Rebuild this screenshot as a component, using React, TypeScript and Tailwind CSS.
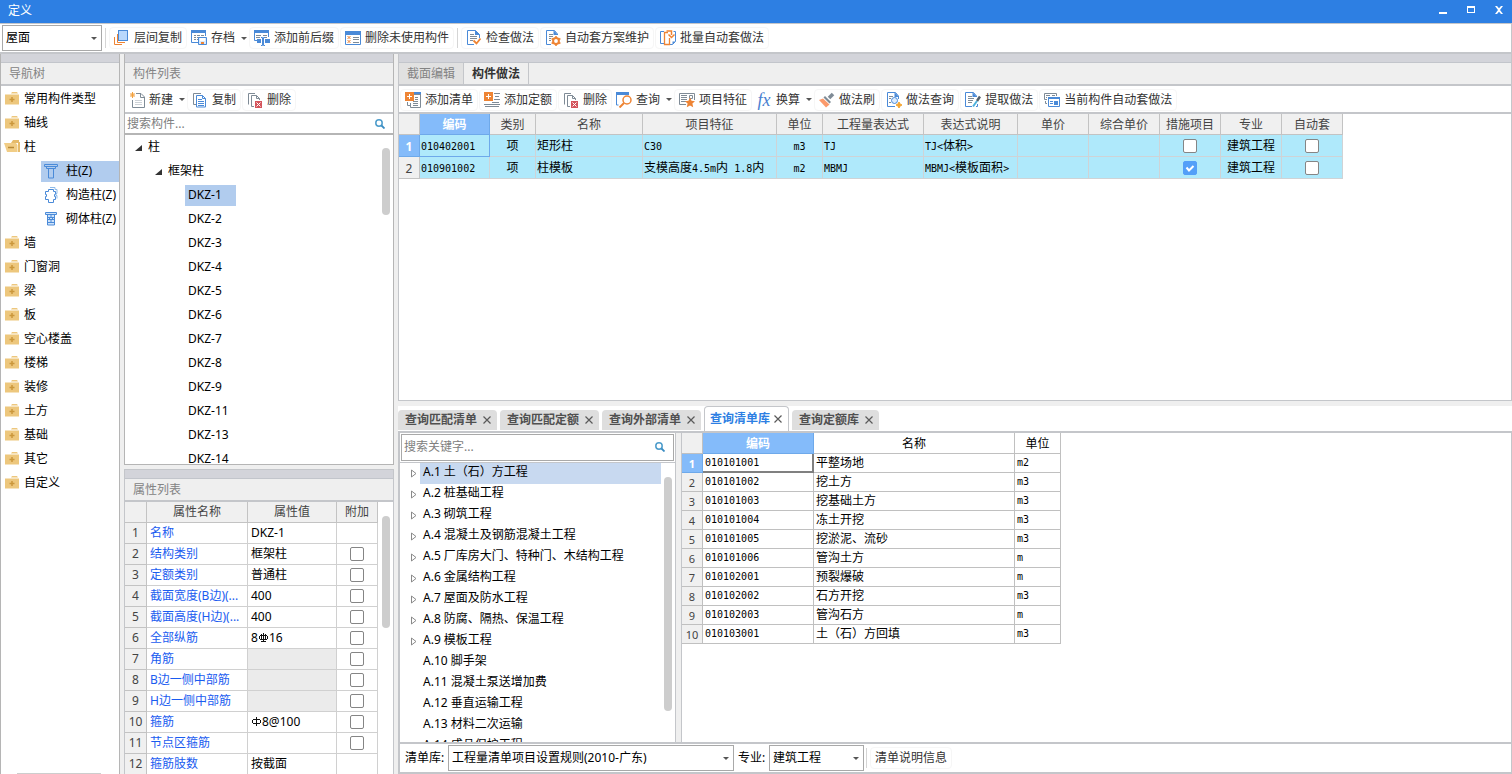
import { useState, type ReactNode } from "react";
import clsx from "clsx";

const BLUE = "#4a8ad8";
const GRAY = "#7f8b96";
const ORANGE = "#ee8434";

const Svg = ({ children }: { children: ReactNode }) => (
  <svg className="size-4 shrink-0" viewBox="0 0 16 16" fill="none" aria-hidden="true">
    {children}
  </svg>
);

const Caret = () => (
  <svg className="h-[3px] w-1.5 shrink-0" viewBox="0 0 6 3" aria-hidden="true">
    <path d="M0 0h6L3 3z" fill="#555" />
  </svg>
);

const LayerCopyIcon = () => (
  <Svg>
    <path d="M3.500 4v8.500H11M.5 7v7.500H8" stroke={ORANGE} />
    <rect x="4.5" y="0.5" width="9" height="10" fill="#b9d8fc" stroke={BLUE} />
  </Svg>
);

const ArchiveIcon = () => (
  <Svg>
    <path d="M0 0h15v3H0z" fill={BLUE} />
    <path d="M.5 3v9.500H7M14.500 3v3" stroke={BLUE} />
    <path d="M3 5.500h2M6 5.500h3M10 5.500h3M3 7.500h2M6 7.500h2M3 9.500h2M6 9.500h1" stroke={GRAY} />
    <path d="M7.500 7.500h8v7h-8z" fill="#d9eafd" stroke={BLUE} />
    <path d="M9 8h5v3H9z" fill="#fff" />
    <path d="M10 12h3v2h-3z" fill={ORANGE} />
  </Svg>
);

const AffixIcon = () => (
  <Svg>
    <path d="M0 0h15v3H0z" fill={BLUE} />
    <path d="M.5 3v7.500H3M14.500 3v4" stroke={BLUE} />
    <path d="M2 5.500h5M2 7.500h4M9 5.500h4M10 7.500h3" stroke={GRAY} />
    <path d="M3 9h4v4H3zM11 9h5v4h-5z" fill={BLUE} />
    <path d="M7 7.500h1.500v8H7M11 7.500H9.500v8H11" stroke={BLUE} />
  </Svg>
);

const UnusedIcon = () => (
  <Svg>
    <path d="M.5 2v12.500h15V2" stroke={BLUE} />
    <path d="M0 1h16v4H0z" fill={BLUE} />
    <path d="M8 7.500h6M8 9.500h6M8 12.500h6" stroke={GRAY} />
    <path d="m2.500 6 3 3m0-3-3 3m0 1 3 3m0-3-3 3" stroke={ORANGE} />
  </Svg>
);

const DocCheckIcon = () => (
  <Svg>
    <path d="M13.500 8V4.500L9.500.5h-8v14H8" stroke={BLUE} />
    <path d="M9 0v5h5z" fill={BLUE} />
    <path d="M4 4.500h4M4 6.500h7M4 8.500h7M4 10.500h3" stroke={GRAY} />
    <path d="m7.500 10.500 3 3L14.500 8.500" stroke={ORANGE} strokeWidth="1.800" />
  </Svg>
);

const DocGearIcon = () => (
  <Svg>
    <path d="M12.500 5V4L9.500.5h-8v14H6" stroke={BLUE} />
    <path d="M8.500 0v5H13z" fill={BLUE} />
    <path d="M4 4.500h4M4 6.500h4M4 8.500h2M4 10.500h2" stroke={GRAY} />
    <circle cx="11" cy="11" r="2.900" stroke={ORANGE} strokeWidth="2" />
    <path d="M11 6v2M11 14v2M6.600 8.500l1.800 1M13.600 12.500l1.800 1M6.600 13.500l1.800-1M13.600 9.500l1.800-1" stroke={ORANGE} strokeWidth="1.600" />
  </Svg>
);

const BatchIcon = () => (
  <Svg>
    <path d="M4 1.500H.5v12H4" stroke={BLUE} />
    <path d="M9.500 14.500h3l3-3v-10h-2" stroke={BLUE} />
    <path d="M12.500 14.500v-3h3" fill={BLUE} />
    <path d="M8 2.500H4.500v12h5V8" stroke={ORANGE} strokeWidth="1.300" />
    <path d="M6.500 1h5v4M8.500 4.500l3 3 3-3" stroke={ORANGE} strokeWidth="1.500" />
  </Svg>
);

const NewIcon = () => (
  <Svg>
    <path d="M7 1.500h5l3.500 3.500v10.500h-12V8" stroke={GRAY} />
    <path d="M11.500 1.500v4h4" stroke={GRAY} />
    <path d="M6 8.500h7M6 10.500h7M6 12.500h7" stroke="#cdd2d7" />
    <path d="m1.500 1 4 4m0-4-4 4M3.500 0v6M1 3h5" stroke="#f3a03c" />
  </Svg>
);

const CopyIcon = () => (
  <Svg>
    <path d="M9 1.500H1.500v11H4" stroke={GRAY} />
    <path d="M4.500 3.500h6l3 3v8.500h-9z" fill="#fff" stroke={BLUE} />
    <path d="M10.500 3.500v3h3" stroke={BLUE} />
    <path d="M6 7.500h4M6 9.500h6M6 11.500h6M6 13.500h6" stroke={BLUE} />
  </Svg>
);

const DeleteIcon = () => (
  <Svg>
    <path d="M8 1.500H1.500v11" stroke={GRAY} />
    <path d="M7 14.500H4.500v-11h5l3 3V8M9.500 3.500v3h3" stroke={GRAY} />
    <path d="M8 9h7v7H8z" fill="#d4545c" />
    <path d="m9.500 10.500 4 4m0-4-4 4" stroke="#fff" />
  </Svg>
);

const AddListIcon = () => (
  <Svg>
    <path d="M9 0h7v3H9z" fill={BLUE} />
    <path d="M9 2.500h6.500v13H5.500V11" stroke={GRAY} />
    <path d="M2.500 10v3.500h3M10 5.500h3M10 7.500h3M8 9.500h5M8 11.500h5M8 13.500h5" stroke={GRAY} />
    <path d="M0 0h9v9H0z" fill={ORANGE} />
    <path d="M4.500 2v5M2 4.500h5" stroke="#fff" />
  </Svg>
);

const AddQuotaIcon = () => (
  <Svg>
    <path d="M10 1.500h6M11 4.500h4M10 7.500h6M8 10.500h7M0 12.500h16M1 14.500h14" stroke={GRAY} />
    <path d="M0 0h9v9H0z" fill={ORANGE} />
    <path d="M4.500 2v5M2 4.500h5" stroke="#fff" />
  </Svg>
);

const QueryIcon = () => (
  <Svg>
    <path d="M0 0h13v3H0z" fill={BLUE} />
    <path d="M.5 3v10h2" stroke={BLUE} />
    <circle cx="11" cy="8" r="4" stroke={ORANGE} strokeWidth="1.500" />
    <path d="m8 11-4.500 4.500" stroke={ORANGE} strokeWidth="2" />
  </Svg>
);

const FeatureIcon = () => (
  <Svg>
    <path d="M15.500 8V1.500H.5v11H7" stroke={GRAY} />
    <path d="M2 3.500h6M2 5.500h6M2 7.500h6M2 9.500h5" stroke={GRAY} />
    <path d="M10.500 3.500h3v3h-3z" stroke={GRAY} />
    <path d="m11 5.500 1.500 3.300 3.500.4-2.600 2.400.8 3.600-3.200-1.800-3.200 1.800.8-3.600L6 9.200l3.500-.4z" fill={ORANGE} />
  </Svg>
);

const FxIcon = () => (
  <span className="w-4 shrink-0 font-['Liberation_Serif',serif] text-lg leading-4 text-[#4a7fd0] italic">
    fx
  </span>
);

const BrushIcon = () => (
  <Svg>
    <path d="m14 2-4 4" stroke={GRAY} strokeWidth="3.500" />
    <path d="m6 4 6 6-1.500 1.500-6-6z" fill={GRAY} />
    <path d="M4 6.500 0 8l7 7.500 3.500-3z" fill="#fb9a6c" />
  </Svg>
);

const DocSearchIcon = () => (
  <Svg>
    <path d="M12.500 7V4L9.500.5h-8v14H9" stroke={BLUE} />
    <path d="M8.500 0v5H13z" fill={BLUE} />
    <path d="M3 4.500h4M3 6.500h2M3 10.500h2" stroke={GRAY} />
    <circle cx="8.500" cy="8.500" r="3" fill="#dcebfd" stroke={BLUE} />
    <path d="m13 10 1 2 2 1-2 1-1 2-1-2-2-1 2-1z" fill="#f5a531" stroke="#f5a531" />
  </Svg>
);

const ExtractIcon = () => (
  <Svg>
    <path d="M11.500 5V4L8.500.5h-8v14H7M12.500 12v2.500H11" stroke={BLUE} />
    <path d="M7.500 0v5H12z" fill={BLUE} />
    <path d="M3 4.500h4M3 6.500h6M3 8.500h5M3 10.500h4" stroke={GRAY} />
    <path d="M15 4.500 12 9" stroke="#56616b" strokeWidth="2.500" />
    <path d="m12 9-4 5.500" stroke="#4db1dc" strokeWidth="2" />
  </Svg>
);

const AutoSetIcon = () => (
  <Svg>
    <path d="M12.500 4V1.500H.5v6H3" stroke={GRAY} />
    <path d="M2 3.500h4M8 3.500h3M2 5.500h1M1.500 9v2.500H3" stroke={GRAY} />
    <path d="M4.500 5.500h11v9h-11z" fill="#fff" stroke={BLUE} />
    <path d="M4 5h12v2H4zM10 9h4v4h-4z" fill={BLUE} />
    <path d="M6 9.500h3M6 11.500h3" stroke={BLUE} />
  </Svg>
);

const SearchIcon = () => (
  <svg className="size-2.5 shrink-0" viewBox="0 0 10 10" fill="none" aria-hidden="true">
    <circle cx="4" cy="4" r="3.200" stroke="#4d9ccb" strokeWidth="1.500" />
    <path d="m6.500 6.500 3 3" stroke="#3a8cc2" strokeWidth="1.800" />
  </svg>
);

const CloseIcon = () => (
  <svg className="size-2.5 shrink-0" viewBox="0 0 10 10" fill="none" aria-hidden="true">
    <path d="m1.500 1.500 7 7m0-7-7 7" stroke="#5a5a5a" strokeWidth="1.200" />
  </svg>
);

const FolderIcon = ({ open }: { open?: boolean }) => (
  <Svg>
    {open ? (
      <>
        <path d="M9 1h6v2h1v10h-2V4H7z" fill="#e6bb6a" />
        <path d="M0 4h12l1.500 2v7H3z" fill="#f1cd86" />
        <path d="M4 8.500h6" stroke="#b98a35" strokeWidth="1.500" />
      </>
    ) : (
      <>
        <path d="M8 1h5l1 1.500H7zM1 3.500h14v10H1z" fill="#edc77d" />
        <path d="M8 6v5M5.500 8.500h5" stroke="#cb973c" strokeWidth="1.500" />
      </>
    )}
  </Svg>
);

const ColumnIcon = () => (
  <Svg>
    <path d="M.5 1.500h13v2H.5zM2.500 3.500v2h9v-2M4.500 5.500v9.500h5V5.500" stroke={BLUE} />
  </Svg>
);

const StructColumnIcon = () => (
  <Svg>
    <path d="M4.500 2.500h5v2h2v3h-1v2h1v3h-2v3h-5v-3h-3v-3h1v-2h-1v-3h3z" stroke={BLUE} />
    <path d="M6 .500h5v2h2v4h-1v2h1v3" stroke="#8fbbe9" />
  </Svg>
);

const MasonryIcon = () => (
  <Svg>
    <path d="M1.500 1.500h11v2h-11zM3.500 3.500v10.500h7V3.500" fill="#cfe3fa" stroke={BLUE} />
    <path d="M4 6.500h6M4 8.500h6M4 11.500h6M7 4v2.500M5.500 6.500v2M8.500 6.500v2M7 8.500v3" stroke={BLUE} />
  </Svg>
);

/* rebar grade marks */
const Rebar = ({ grade }: { grade: 1 | 3 }) => (
  <svg
    className="mx-px mb-1 inline size-[9px]"
    viewBox="0 0 9 9"
    fill="none"
    stroke="#111"
    role="img"
    aria-label={grade === 3 ? "HRB400" : "HPB300"}
  >
    <path
      d={
        grade === 3
          ? "M4.500 0v9M2.500 1v6M6.500 1v6M.5 3v3M8.500 3v3M1 2.500h7M1 6.500h7M2 8.500h5"
          : "M4.500 0v9M1 2.500h7M1 6.500h7M.5 3v3M8.500 3v3"
      }
    />
  </svg>
);

// half-width characters are set smaller so that two of them fill one full-width cell
const GridText = ({ text }: { text: string }) => (
  <>
    {text.split(/([\x20-\x7e]+)/).map((part, i) =>
      i % 2 ? (
        <span key={i} className="font-['DejaVu_Sans_Mono',monospace] text-[10px]">
          {part}
        </span>
      ) : (
        part
      )
    )}
  </>
);

type ToolProps = { icon: ReactNode; label: string; menu?: boolean };

const Tool = ({ icon, label, menu }: ToolProps) => (
  <button
    type="button"
    className={clsx(
      "flex h-[22px] shrink-0 items-center gap-1 rounded border whitespace-nowrap text-[#333]",
      menu ? "border-transparent pl-0.5" : "border-[#f6f6f6] px-1"
    )}
  >
    {icon}
    <span>{label}</span>
    {menu && (
      <span className="pl-0.5">
        <Caret />
      </span>
    )}
  </button>
);

const Separator = () => <span className="mx-0.5 h-5 w-px bg-[#d5d5d5]" />;

type PickProps = { label: string; value: string; className: string };

const Pick = ({ label, value, className }: PickProps) => (
  <span className={clsx("relative flex h-[26px] items-center border border-[#a9a9a9] bg-white", className)}>
    <select aria-label={label} className="h-full w-full appearance-none bg-transparent px-[3px] text-black outline-none">
      <option>{value}</option>
    </select>
    <span className="pointer-events-none absolute right-1">
      <Caret />
    </span>
  </span>
);

const Check = ({ label, checked = false }: { label: string; checked?: boolean }) => {
  const [on, setOn] = useState(checked);
  return (
    <span className="relative mx-auto block size-3.5">
      <input
        type="checkbox"
        aria-label={label}
        checked={on}
        onChange={() => setOn(!on)}
        className="block size-3.5 appearance-none rounded-xs border border-[#858585] bg-white checked:border-[#539ff8] checked:bg-[#539ff8]"
      />
      {on && (
        <svg className="pointer-events-none absolute inset-0 size-3.5" viewBox="0 0 14 14" fill="none" aria-hidden="true">
          <path d="m3.500 6.500 2.500 3 4.500-4.500" stroke="#fff" strokeWidth="2" />
        </svg>
      )}
    </span>
  );
};

const Strip = () => <div className="h-[9px] shrink-0 border-b border-[#c2c5cb] bg-[#d3d4da]" />;

const PanelTitle = ({ children }: { children: ReactNode }) => (
  <>
    <Strip />
    <h2 className="flex h-[23px] shrink-0 items-center border-b-2 border-[#c4c6ca] bg-[#efefef] pt-px pl-2 text-[#838383]">
      {children}
    </h2>
  </>
);

const navItems = [
  { label: "常用构件类型" },
  { label: "轴线" },
  {
    label: "柱",
    children: [
      { label: "柱(Z)", icon: <ColumnIcon /> },
      { label: "构造柱(Z)", icon: <StructColumnIcon /> },
      { label: "砌体柱(Z)", icon: <MasonryIcon /> },
    ],
  },
  { label: "墙" },
  { label: "门窗洞" },
  { label: "梁" },
  { label: "板" },
  { label: "空心楼盖" },
  { label: "楼梯" },
  { label: "装修" },
  { label: "土方" },
  { label: "基础" },
  { label: "其它" },
  { label: "自定义" },
];

const NavTree = () => (
  <nav className="flex w-[120px] shrink-0 flex-col border-x border-[#b5b5b5] bg-white">
    <PanelTitle>导航树</PanelTitle>
    <ul className="min-h-0 flex-1 overflow-hidden pt-px">
      {navItems.map((item) => (
        <li key={item.label}>
          <button type="button" className="flex h-6 w-full items-center gap-1 pl-[3px] whitespace-nowrap">
            <FolderIcon open={!!item.children} />
            {item.label}
          </button>
          {item.children && (
            <ul>
              {item.children.map((child, i) => (
                <li key={child.label} className="flex h-6 items-center pl-10">
                  <button
                    type="button"
                    className={clsx(
                      "flex h-[21px] flex-1 items-center gap-1.5 pl-[3px] whitespace-nowrap",
                      i === 0 && "bg-[#b1ccee]"
                    )}
                  >
                    {child.icon}
                    {child.label}
                  </button>
                </li>
              ))}
            </ul>
          )}
        </li>
      ))}
    </ul>
    <div className="ml-4 h-px w-[84px] bg-[#cdcdcd]" />
  </nav>
);

const Expanded = () => (
  <svg className="size-[7px] shrink-0" viewBox="0 0 7 7" aria-hidden="true">
    <path d="M7 1v6H0z" fill="#333" />
  </svg>
);

const components = ["1", "2", "3", "4", "5", "6", "7", "8", "9", "11", "13", "14"];

const ComponentList = () => (
  <section className="flex min-h-0 flex-[411] flex-col border-x border-b border-[#b5b5b5] bg-white">
    <PanelTitle>构件列表</PanelTitle>
    <div className="flex h-7 shrink-0 items-center gap-px border-b-2 border-[#c4c6ca] pt-px pl-px">
      <Tool icon={<NewIcon />} label="新建" menu />
      <Tool icon={<CopyIcon />} label="复制" />
      <Tool icon={<DeleteIcon />} label="删除" />
    </div>
    <div className="flex h-[21px] shrink-0 items-center border-b-2 border-[#b5b5b5] pr-2">
      <input
        aria-label="搜索构件"
        placeholder="搜索构件..."
        className="min-w-0 flex-1 px-0.5 outline-none placeholder:text-[#808080]"
      />
      <SearchIcon />
    </div>
    <div className="relative min-h-0 flex-1 overflow-hidden">
      <button type="button" className="flex h-6 items-center gap-1.5 pl-2.5">
        <Expanded />柱
      </button>
      <button type="button" className="flex h-6 items-center gap-1.5 pl-[30px]">
        <Expanded />
        框架柱
      </button>
      <ul className="pl-[60px]">
        {components.map((n, i) => (
          <li key={n} className="flex h-6 items-center">
            <button type="button" className={clsx("h-[21px] pr-3.5 pl-[3px]", i === 0 && "bg-[#b1ccee]")}>
              DKZ-{n}
            </button>
          </li>
        ))}
      </ul>
      <div className="absolute top-[13px] right-[3px] h-[67px] w-2 rounded-full bg-[#cdcdcd]" />
    </div>
  </section>
);

type Property = { name: string; value?: ReactNode; extra?: boolean; locked?: boolean };

const properties: Property[] = [
  { name: "名称", value: "DKZ-1" },
  { name: "结构类别", value: "框架柱", extra: true },
  { name: "定额类别", value: "普通柱", extra: true },
  { name: "截面宽度(B边)(...", value: "400", extra: true },
  { name: "截面高度(H边)(...", value: "400", extra: true },
  { name: "全部纵筋", value: <>8<Rebar grade={3} />16</>, extra: true },
  { name: "角筋", extra: true, locked: true },
  { name: "B边一侧中部筋", extra: true, locked: true },
  { name: "H边一侧中部筋", extra: true, locked: true },
  { name: "箍筋", value: <><Rebar grade={1} />8@100</>, extra: true },
  { name: "节点区箍筋", extra: true },
  { name: "箍筋肢数", value: "按截面" },
];

const PropertyList = () => (
  <section className="flex min-h-0 flex-[305] flex-col border-x border-t border-[#c4c6ca] bg-white">
    <PanelTitle>属性列表</PanelTitle>
    <div className="relative min-h-0 flex-1 overflow-hidden">
      <table className="w-[253px] table-fixed border-separate border-spacing-0">
        <colgroup>
          <col className="w-[22px]" />
          <col className="w-[101px]" />
          <col className="w-[89px]" />
          <col className="w-[41px]" />
        </colgroup>
        <thead>
          <tr className="h-[21px] bg-[#f0f0f0] text-[#444]">
            {["", "属性名称", "属性值", "附加"].map((h) => (
              <th key={h} className="border-r border-b border-[#c3c3c3] p-0 pt-px font-normal">
                {h}
              </th>
            ))}
          </tr>
        </thead>
        <tbody>
          {properties.map((p, i) => (
            <tr key={p.name} className="h-[21px]">
              <th className="border-r border-b border-[#c3c3c3] bg-[#f0f0f0] p-0 pt-px font-normal text-[#444]">{i + 1}</th>
              <td className="border-r border-b border-[#d0d0d0] p-0 pt-px pl-[3px] whitespace-nowrap text-[#1a5cf0]">{p.name}</td>
              <td
                className={clsx(
                  "border-r border-b border-[#d0d0d0] p-0 pt-px pl-[3px] whitespace-nowrap",
                  p.locked && "bg-[#ebebeb]"
                )}
              >
                {p.value}
              </td>
              <td className="border-r border-b border-[#d0d0d0] p-0">
                {p.extra && <Check label={`${p.name} 附加`} />}
              </td>
            </tr>
          ))}
        </tbody>
      </table>
      <div className="absolute top-3.5 right-[3px] h-28 w-2 rounded-full bg-[#cdcdcd]" />
    </div>
  </section>
);

const methodColumns = [
  "编码", "类别", "名称", "项目特征", "单位", "工程量表达式", "表达式说明",
  "单价", "综合单价", "措施项目", "专业", "自动套",
];

const methodRows = [
  { cells: ["010402001", "项", "矩形柱", "C30", "m3", "TJ", "TJ<体积>", "", ""], measure: false },
  { cells: ["010901002", "项", "柱模板", "支模高度4.5m内 1.8内", "m2", "MBMJ", "MBMJ<模板面积>", "", ""], measure: true },
];

const MethodTable = () => (
  <table className="w-[944px] table-fixed border-separate border-spacing-0">
    <colgroup>
      <col className="w-[21px]" />
      <col className="w-[70px]" />
      <col className="w-[46px]" />
      <col className="w-[107px]" />
      <col className="w-[134px]" />
      <col className="w-[46px]" />
      <col className="w-[101px]" />
      <col className="w-[94px]" />
      <col className="w-[71px]" />
      <col className="w-[71px]" />
      <col className="w-[61px]" />
      <col className="w-[61px]" />
      <col className="w-[61px]" />
    </colgroup>
    <thead>
      <tr className="h-[21px] bg-[#f0f0f0] text-[#444]">
        <th className="border-r border-b border-[#c3c3c3] p-0" />
        {methodColumns.map((h, i) => (
          <th
            key={h}
            className={clsx(
              "border-r border-b p-0 pt-px",
              i === 0 ? "border-[#6ea9ea] bg-[#84bbfa] font-bold text-white" : "border-[#c3c3c3] font-normal"
            )}
          >
            {h}
          </th>
        ))}
      </tr>
    </thead>
    <tbody>
      {methodRows.map((row, r) => (
        <tr key={row.cells[0]} className="h-[22px] bg-[#afe9fb]">
          <th
            className={clsx(
              "border-r border-b p-0 pt-0.5",
              r === 0
                ? "border-[#6ea9ea] bg-[#84bbfa] font-bold text-white"
                : "border-[#c3c3c3] bg-[#f0f0f0] font-normal text-[#444]"
            )}
          >
            {r + 1}
          </th>
          {row.cells.map((c, i) => (
            <td
              key={i}
              className={clsx(
                "border-r border-b p-0 whitespace-nowrap",
                r === 0 && i === 0 ? "border-[#6ea9ea]" : "border-[#cfd3d6]",
                i === 1 || i === 4 ? "text-center" : "pl-px"
              )}
            >
              <GridText text={c} />
            </td>
          ))}
          <td className="border-r border-b border-[#cfd3d6] p-0">
            <Check label="措施项目" checked={row.measure} />
          </td>
          <td className="border-r border-b border-[#cfd3d6] p-0 text-center">建筑工程</td>
          <td className="border-r border-b border-[#cfd3d6] p-0">
            <Check label="自动套" />
          </td>
        </tr>
      ))}
    </tbody>
  </table>
);

const MethodPanel = () => (
  <section className="flex min-h-0 flex-[346] flex-col border-x border-b border-[#c4c6ca] bg-white">
    <Strip />
    <div className="flex h-[23px] shrink-0 border-b-2 border-[#c4c6ca] bg-[#efefef]">
      <button type="button" className="w-[65px] border-r border-[#c4c6ca] bg-[#e1e1e1] text-[#838383]">
        截面编辑
      </button>
      <button type="button" className="w-[65px] border-r border-[#c4c6ca] font-bold text-[#333]">
        构件做法
      </button>
    </div>
    <div className="flex h-7 shrink-0 items-center gap-px border-b-2 border-[#c4c6ca] pt-px pl-px">
      <Tool icon={<AddListIcon />} label="添加清单" />
      <Tool icon={<AddQuotaIcon />} label="添加定额" />
      <Tool icon={<DeleteIcon />} label="删除" />
      <Tool icon={<QueryIcon />} label="查询" menu />
      <Tool icon={<FeatureIcon />} label="项目特征" />
      <Tool icon={<FxIcon />} label="换算" menu />
      <Tool icon={<BrushIcon />} label="做法刷" />
      <Tool icon={<DocSearchIcon />} label="做法查询" />
      <Tool icon={<ExtractIcon />} label="提取做法" />
      <Tool icon={<AutoSetIcon />} label="当前构件自动套做法" />
    </div>
    <MethodTable />
  </section>
);

const queryTabs = ["查询匹配清单", "查询匹配定额", "查询外部清单", "查询清单库", "查询定额库"];

const QueryTabs = () => {
  const [active, setActive] = useState("查询清单库");
  return (
    <div className="flex h-[27px] shrink-0 items-end gap-[3px] border-b-2 border-[#c4c6ca] bg-white">
      {queryTabs.map((t) => (
        <div
          key={t}
          className={clsx(
            "flex items-center rounded-t font-bold",
            t === active
              ? "h-[25px] gap-[3px] border border-b-0 border-[#c4c6ca] bg-white px-[5px] text-[#2d7fe3]"
              : "mb-px h-5 gap-[5px] bg-[#dedede] pr-[5px] pl-[7px] text-[#505050]"
          )}
        >
          <button type="button" onClick={() => setActive(t)}>
            {t}
          </button>
          <button type="button" aria-label={`关闭${t}`}>
            <CloseIcon />
          </button>
        </div>
      ))}
    </div>
  );
};

const chapters = [
  "A.1 土（石）方工程",
  "A.2 桩基础工程",
  "A.3 砌筑工程",
  "A.4 混凝土及钢筋混凝土工程",
  "A.5 厂库房大门、特种门、木结构工程",
  "A.6 金属结构工程",
  "A.7 屋面及防水工程",
  "A.8 防腐、隔热、保温工程",
  "A.9 模板工程",
  "A.10 脚手架",
  "A.11 混凝土泵送增加费",
  "A.12 垂直运输工程",
  "A.13 材料二次运输",
  "A.14 成品保护工程",
];

const ChapterTree = () => (
  <div className="flex w-[276px] shrink-0 flex-col border-r border-[#c4c6ca]">
    <div className="m-px flex h-[27px] shrink-0 items-center border border-[#a9a9a9] pr-2">
      <input
        aria-label="搜索关键字"
        placeholder="搜索关键字..."
        className="min-w-0 flex-1 px-0.5 outline-none placeholder:text-[#808080]"
      />
      <SearchIcon />
    </div>
    <div className="relative min-h-0 flex-1 overflow-hidden border-t border-[#c4c6ca]">
      <ul>
        {chapters.map((c, i) => (
          <li key={c} className="flex h-[21px] items-center pr-[14px] pl-[11px]">
            <svg className={clsx("h-[9px] w-[9px] shrink-0", i > 8 && "invisible")} viewBox="0 0 9 9" aria-hidden="true">
              <path d="M.5 1v7L5 4.500z" fill="#fff" stroke="#8a8a8a" />
            </svg>
            <button
              type="button"
              className={clsx("h-full flex-1 pb-0.5 pl-[3px] text-left whitespace-nowrap", i === 0 && "bg-[#c8d9f0]")}
            >
              {c}
            </button>
          </li>
        ))}
      </ul>
      <div className="absolute top-3.5 right-[3px] h-[234px] w-2 rounded-full bg-[#cdcdcd]" />
    </div>
  </div>
);

const listRows = [
  ["010101001", "平整场地", "m2"],
  ["010101002", "挖土方", "m3"],
  ["010101003", "挖基础土方", "m3"],
  ["010101004", "冻土开挖", "m3"],
  ["010101005", "挖淤泥、流砂", "m3"],
  ["010101006", "管沟土方", "m"],
  ["010102001", "预裂爆破", "m"],
  ["010102002", "石方开挖", "m3"],
  ["010102003", "管沟石方", "m"],
  ["010103001", "土（石）方回填", "m3"],
];

const ListTable = () => (
  <table className="w-[379px] table-fixed border-separate border-spacing-0">
    <colgroup>
      <col className="w-[21px]" />
      <col className="w-[111px]" />
      <col className="w-[201px]" />
      <col className="w-[46px]" />
    </colgroup>
    <thead>
      <tr className="h-[21px]">
        <th className="border-r border-b border-[#c0c0c0] bg-[#f0f0f0] p-0" />
        <th className="border-r border-b border-[#6ea9ea] bg-[#84bbfa] p-0 pt-0.5 text-white">编码</th>
        <th className="border-r border-b border-[#c0c0c0] p-0 pt-0.5 font-normal">名称</th>
        <th className="border-r border-b border-[#c0c0c0] p-0 pt-0.5 font-normal">单位</th>
      </tr>
    </thead>
    <tbody>
      {listRows.map((row, r) => (
        <tr key={row[0]} className="h-[19px]">
          <th
            className={clsx(
              "border-r border-b p-0 pt-0.5 text-[11px] leading-4",
              r === 0 ? "border-[#6ea9ea] bg-[#84bbfa] text-white" : "border-[#c0c0c0] bg-[#f0f0f0] font-normal text-[#444]"
            )}
          >
            {r + 1}
          </th>
          {row.map((c, i) => (
            <td
              key={i}
              className={clsx(
                "p-0 pl-0.5 leading-4 whitespace-nowrap",
                r === 0 && i === 0 ? "border-r-2 border-b-2 border-[#808080]" : "border-r border-b border-[#c0c0c0]"
              )}
            >
              <GridText text={c} />
            </td>
          ))}
        </tr>
      ))}
    </tbody>
  </table>
);

const QueryPanel = () => (
  <section className="flex min-h-0 flex-[369] flex-col">
    <QueryTabs />
    <div className="flex min-h-0 flex-1 flex-col border-r border-b-2 border-l-2 border-[#c4c6ca] bg-white">
      <div className="flex min-h-0 flex-1">
        <ChapterTree />
        <div className="w-[5px] shrink-0 bg-[#efefef]" />
        <div className="min-w-0 flex-1 overflow-hidden border-l border-[#c4c6ca]">
          <ListTable />
        </div>
      </div>
      <div className="flex h-[30px] shrink-0 items-center border-t-2 border-[#c4c6ca] pl-[5px]">
        <span className="w-[43px] whitespace-nowrap">清单库:</span>
        <Pick label="清单库" value="工程量清单项目设置规则(2010-广东)" className="w-[286px]" />
        <span className="w-[35px] pl-1 whitespace-nowrap">专业:</span>
        <Pick label="专业" value="建筑工程" className="w-[95px]" />
        <Separator />
        <button type="button" className="ml-px h-[22px] rounded border border-[#f6f6f6] px-1 text-[#333]">
          清单说明信息
        </button>
      </div>
    </div>
  </section>
);

const TitleBar = () => (
  <header className="flex h-[23px] shrink-0 items-center justify-between bg-[#2d7fe3] px-2 text-white">
    <h1 className="pb-0.5">定义</h1>
    <div className="flex items-center gap-[18px] pb-1">
      {[
        { name: "最小化", d: "M1 7h8v2H1z" },
        { name: "最大化", d: "M1 1h8v7H1zM2 3v4h6V3z" },
        { name: "关闭", d: "M1 1h2l2 2.200L7 1h2L6 5l3 4H7L5 6.800 3 9H1l3-4z" },
      ].map((b) => (
        <button key={b.name} type="button" aria-label={b.name}>
          <svg className="size-2.5" viewBox="0 0 10 10" aria-hidden="true">
            <path d={b.d} fill="#fff" fillRule="evenodd" />
          </svg>
        </button>
      ))}
    </div>
  </header>
);

const MainToolbar = () => (
  <div className="flex h-[31px] shrink-0 items-center gap-px border-t border-r border-b-2 border-[#c4c6ca] bg-white pl-0.5">
    <Pick label="楼层" value="屋面" className="w-[100px]" />
    <Separator />
    <Tool icon={<LayerCopyIcon />} label="层间复制" />
    <Tool icon={<ArchiveIcon />} label="存档" menu />
    <Tool icon={<AffixIcon />} label="添加前后缀" />
    <Tool icon={<UnusedIcon />} label="删除未使用构件" />
    <Separator />
    <Tool icon={<DocCheckIcon />} label="检查做法" />
    <Tool icon={<DocGearIcon />} label="自动套方案维护" />
    <Tool icon={<BatchIcon />} label="批量自动套做法" />
  </div>
);

export default function App() {
  return (
    <div className="flex h-screen flex-col overflow-hidden bg-[#efefef] font-['Noto_Sans','Noto_Sans_CJK_SC',sans-serif] text-xs text-black">
      <TitleBar />
      <MainToolbar />
      <main className="flex min-h-0 flex-1 gap-1">
        <NavTree />
        <div className="flex w-[270px] shrink-0 flex-col gap-1">
          <ComponentList />
          <PropertyList />
        </div>
        <div className="flex min-w-0 flex-1 flex-col gap-[5px]">
          <MethodPanel />
          <QueryPanel />
        </div>
      </main>
    </div>
  );
}
